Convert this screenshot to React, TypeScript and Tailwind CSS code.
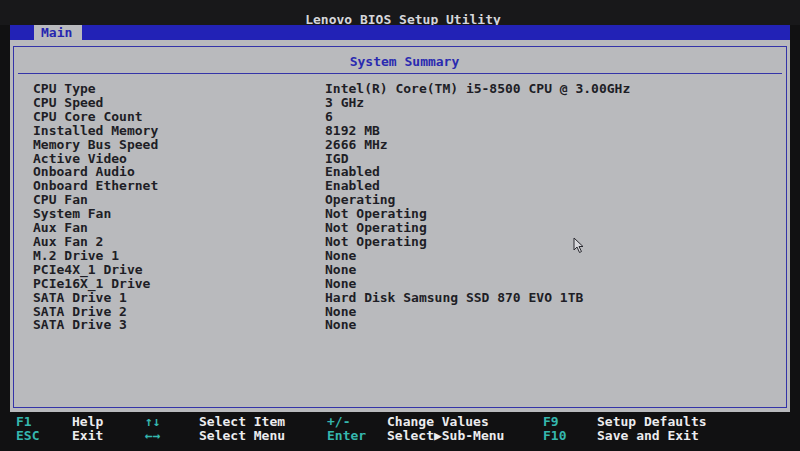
const ROWS: [string, string][] = [
  ["CPU Type", "Intel(R) Core(TM) i5-8500 CPU @ 3.00GHz"],
  ["CPU Speed", "3 GHz"],
  ["CPU Core Count", "6"],
  ["Installed Memory", "8192 MB"],
  ["Memory Bus Speed", "2666 MHz"],
  ["Active Video", "IGD"],
  ["Onboard Audio", "Enabled"],
  ["Onboard Ethernet", "Enabled"],
  ["CPU Fan", "Operating"],
  ["System Fan", "Not Operating"],
  ["Aux Fan", "Not Operating"],
  ["Aux Fan 2", "Not Operating"],
  ["M.2 Drive 1", "None"],
  ["PCIe4X_1 Drive", "None"],
  ["PCIe16X_1 Drive", "None"],
  ["SATA Drive 1", "Hard Disk Samsung SSD 870 EVO 1TB"],
  ["SATA Drive 2", "None"],
  ["SATA Drive 3", "None"],
];

// key / action pairs in the bottom help bar, two lines per column group
const KEYS: [string, string, string, string][] = [
  ["F1", "Help", "ESC", "Exit"],
  ["↑↓", "Select Item", "←→", "Select Menu"],
  ["+/-", "Change Values", "Enter", "Select▶Sub-Menu"],
  ["F9", "Setup Defaults", "F10", "Save and Exit"],
];

const KEY_COLS = ["w-[56px]", "w-[54px]", "w-[60px]", "w-[54px]"];
const ACT_COLS = ["w-[73px]", "w-[128px]", "w-[156px]", "w-[160px]"];

function Cursor() {
  return (
    <svg className="absolute left-[573px] top-[237px]" width="12" height="17" viewBox="0 0 12 17">
      <path d="M1 1 L1 13 L4 10 L6.5 15.5 L8.5 14.5 L6 9.5 L10 9.5 Z" fill="#d8d8dc" stroke="#2a2a30" strokeWidth="1" />
    </svg>
  );
}

export default function App() {
  return (
    <div className="relative w-[800px] h-[451px] bg-[#111112] flex flex-col font-['DejaVu_Sans_Mono','Liberation_Mono',monospace] font-bold text-[13px] overflow-hidden">
      {/* title strip */}
      <div className="h-[25px] bg-[#18181a] flex justify-center pt-[13px] pl-[6px]">
        <span className="text-[#d6d6da] leading-[13px]">Lenovo BIOS Setup Utility</span>
      </div>

      <div className="px-[10px] flex flex-col">
        {/* menu bar */}
        <div className="h-[15px] bg-[#2222b6] flex pl-[24px]">
          <div className="w-[48px] h-[15px] bg-[#b9babe] text-[#2626b0] leading-[15px] pl-[7px]">Main</div>
        </div>

        {/* main panel */}
        <div className="h-[372px] bg-[#b9babd] px-[3px] pt-[6px] pb-[4px]">
          <div className="h-full border-[1.5px] border-[#3434a8] flex flex-col">
            <div className="h-[27px] flex items-center justify-center text-[#2a2ab0] pt-[4px] pl-[9px] mx-[4px] border-b-[1.5px] border-[#3434a8]">
              System Summary
            </div>
            <div className="flex flex-col pt-[8px] pl-[19px] text-[#1e1e26] leading-[13.9px]">
              {ROWS.map(([label, value]) => (
                <div key={label} className="flex">
                  <span className="w-[292px] whitespace-pre">{label}</span>
                  <span className="whitespace-pre">{value}</span>
                </div>
              ))}
            </div>
          </div>
        </div>
      </div>

      {/* help bar */}
      <div className="flex pl-[16px] pt-[3px] leading-[14px]">
        {KEYS.map(([k1, a1, k2, a2], i) => (
          <div key={k1} className="flex">
            <div className={`${KEY_COLS[i]} flex flex-col text-[#35b7ae]`}>
              <span>{k1}</span>
              <span>{k2}</span>
            </div>
            <div className={`${ACT_COLS[i]} flex flex-col text-[#ececee]`}>
              <span className="whitespace-pre">{a1}</span>
              <span className="whitespace-pre">{a2}</span>
            </div>
          </div>
        ))}
      </div>

      <Cursor />
    </div>
  );
}
